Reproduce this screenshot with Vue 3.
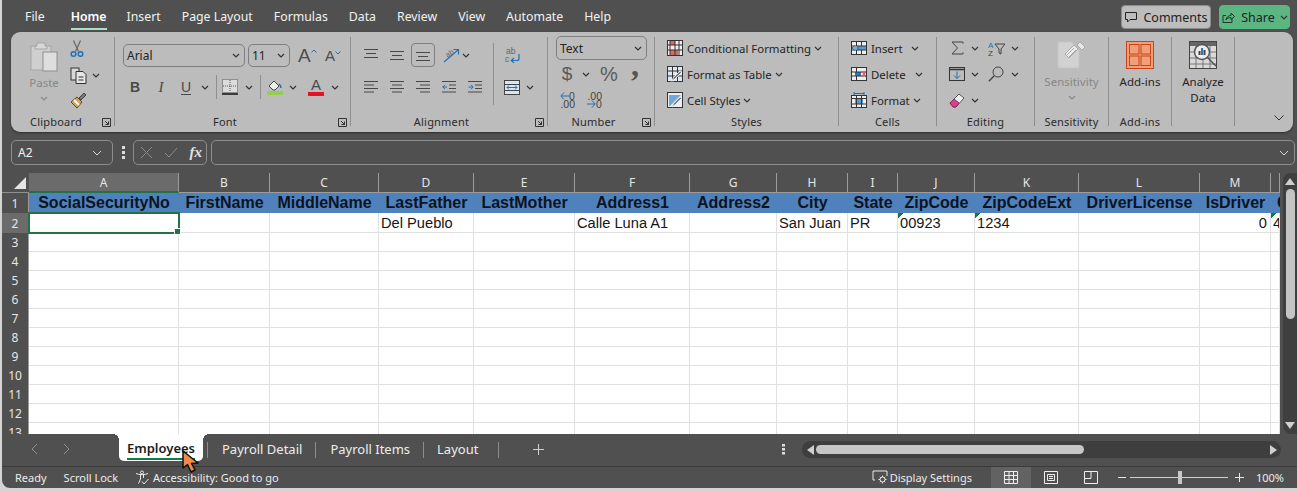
<script setup>
const menus = ['File', 'Home', 'Insert', 'Page Layout', 'Formulas', 'Data', 'Review', 'View', 'Automate', 'Help']
const cols = [
  { l: 'A', w: 150, h: 'SocialSecurityNo' },
  { l: 'B', w: 91, h: 'FirstName' },
  { l: 'C', w: 109, h: 'MiddleName' },
  { l: 'D', w: 95, h: 'LastFather', v: 'Del Pueblo' },
  { l: 'E', w: 101, h: 'LastMother' },
  { l: 'F', w: 115, h: 'Address1', v: 'Calle Luna A1' },
  { l: 'G', w: 87, h: 'Address2' },
  { l: 'H', w: 71, h: 'City', v: 'San Juan' },
  { l: 'I', w: 50, h: 'State', v: 'PR' },
  { l: 'J', w: 77, h: 'ZipCode', v: '00923', flag: true },
  { l: 'K', w: 104, h: 'ZipCodeExt', v: '1234', flag: true },
  { l: 'L', w: 121, h: 'DriverLicense' },
  { l: 'M', w: 71, h: 'IsDriver', v: '0', num: true },
  { l: '', w: 9, h: 'C', v: '4', flag: true, clip: true }
]
const gridCols = '27px ' + cols.map(c => c.w + 'px').join(' ')
const emptyRows = [3, 4, 5, 6, 7, 8, 9, 10, 11, 12, 13]
const tabs = ['Payroll Detail', 'Payroll Items', 'Layout']
</script>

<template>
  <div class="win">
    <header class="menu">
      <nav class="menu-items">
        <span v-for="m in menus" :key="m" class="menu-item" :class="{ on: m === 'Home' }">{{ m }}</span>
      </nav>
      <div class="menu-actions">
        <button class="btn-comments">
          <svg width="14" height="14" viewBox="0 0 14 14" fill="none" stroke="#222"><path d="M1.5 2.5h11v7H6l-2.5 2.5V9.500h-2z"/></svg>
          Comments
        </button>
        <button class="btn-share">
          <svg width="15" height="15" viewBox="0 0 15 15" fill="none" stroke="#1d3a28"><path d="M11 8.500v4H2v-7h3"/><path d="M5 10c.5-3 2.500-4.500 5-4.500V3l3.500 3.500L10 9.500V7.500C8 7.500 6 8 5 10z"/></svg>
          Share
          <svg class="chev" viewBox="0 0 8 5"><path d="M1 1l3 3 3-3"/></svg>
        </button>
      </div>
    </header>

    <section class="ribbon">
      <!-- Clipboard -->
      <div class="group g-clip">
        <div class="clip-body">
          <div class="big faded paste">
            <svg width="28" height="31" viewBox="0 0 28 31"><rect x="1" y="5" width="20" height="24" fill="#cfcfcf" stroke="#a5a5a5"/><path d="M7 5V2h8v3h2v3H5V5z" fill="#d8d8d8" stroke="#a5a5a5"/><rect x="13" y="11" width="14" height="19" fill="#dedede" stroke="#8e8e8e"/></svg>
            <span class="big-label gray">Paste</span>
            <svg class="chev gray-chev" viewBox="0 0 8 5"><path d="M1 1l3 3 3-3"/></svg>
          </div>
          <div class="clip-tools">
            <svg width="14" height="18" viewBox="0 0 14 18" fill="none"><path d="M3.500 0.500l5 11M10.500 0.500l-5 11" stroke="#6a6a6a" stroke-width="1.300"/><circle cx="3.500" cy="14" r="2.300" stroke="#1e6fb8" stroke-width="1.500"/><circle cx="10.500" cy="14" r="2.300" stroke="#1e6fb8" stroke-width="1.500"/></svg>
            <span class="tool-row">
              <svg width="18" height="17" viewBox="0 0 18 17" fill="none" stroke="#333"><rect x="1" y="1" width="8" height="12" fill="#d8d8d8"/><path d="M6 4.500h7l3 3v9H6z" fill="#e6e6e6"/><path d="M8.500 10h5M8.500 13h5"/></svg>
              <svg class="chev" viewBox="0 0 8 5"><path d="M1 1l3 3 3-3"/></svg>
            </span>
            <svg width="17" height="17" viewBox="0 0 17 17"><path d="M1 10l6-5 5 5-5 6z" fill="#d9a05b" stroke="#5d4a32"/><path d="M4 8l5 5" stroke="#fff" stroke-width="2"/><path d="M9 6l5-5 2 2-5 5z" fill="#777" stroke="#444"/></svg>
          </div>
        </div>
        <div class="label lab-clip">Clipboard</div>
        <svg class="launcher" viewBox="0 0 9 9" fill="none" stroke="#333"><path d="M.5.500h8v8h-8zM3 3l3.500 3.500M6.500 3.500v3h-3"/></svg>
      </div>

      <!-- Font -->
      <div class="group g-font">
        <div class="font-top">
          <div class="select sel-name">Arial<svg class="chev" viewBox="0 0 8 5"><path d="M1 1l3 3 3-3"/></svg></div>
          <div class="select sel-size">11<svg class="chev" viewBox="0 0 8 5"><path d="M1 1l3 3 3-3"/></svg></div>
          <span class="grow-a big-a">A<svg class="mini-caret" viewBox="0 0 6 4"><path d="M.5 3.500l2.500-2.500 2.500 2.500" fill="none" stroke="#2a6ebb"/></svg></span>
          <span class="grow-a small-a">A<svg class="mini-caret" viewBox="0 0 6 4"><path d="M.5.500l2.500 2.500 2.500-2.500" fill="none" stroke="#2a6ebb"/></svg></span>
        </div>
        <div class="font-row">
          <b class="t-b">B</b>
          <i class="t-i">I</i>
          <span class="t-u">U</span>
          <svg class="chev" viewBox="0 0 8 5"><path d="M1 1l3 3 3-3"/></svg>
          <span class="vsep"></span>
          <svg width="16" height="16" viewBox="0 0 16 16" fill="none"><rect x=".5" y=".5" width="15" height="13" fill="#dcdcdc" stroke="#555" stroke-dasharray="1 1"/><path d="M8 1v12M1 7h14" stroke="#555" stroke-dasharray="1 1"/><path d="M0 15h16" stroke="#111" stroke-width="1.500"/></svg>
          <svg class="chev" viewBox="0 0 8 5"><path d="M1 1l3 3 3-3"/></svg>
          <span class="vsep"></span>
          <svg width="16" height="17" viewBox="0 0 16 17"><path d="M2 7l5-5 5 5-4 4H6z" fill="#eee" stroke="#444"/><path d="M12 5c1.500 1 2 2 2 4" fill="none" stroke="#1e6fb8" stroke-width="1.500"/><rect y="12" width="16" height="4" fill="#92d050"/></svg>
          <svg class="chev" viewBox="0 0 8 5"><path d="M1 1l3 3 3-3"/></svg>
          <span class="t-color">A</span>
          <svg class="chev" viewBox="0 0 8 5"><path d="M1 1l3 3 3-3"/></svg>
        </div>
        <div class="label lab-wide">Font</div>
        <svg class="launcher" viewBox="0 0 9 9" fill="none" stroke="#333"><path d="M.5.500h8v8h-8zM3 3l3.500 3.500M6.500 3.500v3h-3"/></svg>
      </div>

      <!-- Alignment -->
      <div class="group g-align">
        <div class="align-body">
          <div class="align-grid">
            <svg class="al" viewBox="0 0 14 12"><path d="M0 .5h14M2 4.500h10M0 8.500h14"/></svg>
            <svg class="al" viewBox="0 0 14 12"><path d="M0 2.500h14M2 6.500h10M0 10.500h14"/></svg>
            <span class="al-box"><svg class="al" viewBox="0 0 14 12"><path d="M0 3.500h14M2 7.500h10M0 11.500h14"/></svg></span>
            <span class="orient">
              <svg width="17" height="16" viewBox="0 0 17 16" fill="none"><path d="M1 15L15 3M10.500 2.500H15.500V7.500" stroke="#1e6fb8" stroke-width="1.100"/><text x="3" y="10" font-size="7.500" fill="#666" font-family="Liberation Sans" transform="rotate(-35 5 8)">ab</text></svg>
              <svg class="chev" viewBox="0 0 8 5"><path d="M1 1l3 3 3-3"/></svg>
            </span>
            <svg class="al" viewBox="0 0 14 12"><path d="M0 .5h14M0 4h10M0 7.500h14M0 11h10"/></svg>
            <svg class="al" viewBox="0 0 14 12"><path d="M0 .5h14M2 4h10M0 7.500h14M2 11h10"/></svg>
            <svg class="al" viewBox="0 0 14 12"><path d="M0 .5h14M4 4h10M0 7.500h14M4 11h10"/></svg>
            <svg class="al" viewBox="0 0 14 12"><path d="M0 .5h14M7 4h7M7 7.500h7M0 11h14"/><path d="M5 6H.5M3 3.800L.8 6 3 8.200" stroke="#1e6fb8"/></svg>
            <svg class="al" viewBox="0 0 14 12"><path d="M0 .5h14M7 4h7M7 7.500h7M0 11h14"/><path d="M.5 6H5M3 3.800L5.200 6 3 8.200" stroke="#1e6fb8"/></svg>
          </div>
          <span class="vsep tall"></span>
          <div class="align-right">
            <svg width="16" height="16" viewBox="0 0 16 16" fill="none"><text x="1" y="7" font-size="8.500" fill="#666" font-family="Liberation Sans">ab</text><text x="0" y="15" font-size="8.500" fill="#666" font-family="Liberation Sans">c</text><path d="M14 7v4.500a2 2 0 0 1-2 2H6.500M9 11l-2.700 2.500L9 16" stroke="#1e6fb8" stroke-width="1.200"/></svg>
            <span class="tool-row merge">
              <svg width="16" height="15" viewBox="0 0 16 15"><rect x=".5" y=".5" width="15" height="14" fill="#d7e6f3" stroke="#444"/><path d="M1 4.500h14M1 10.500h14" stroke="#444"/><path d="M3 7.500h10M5 5.500l-2 2 2 2M11 5.500l2 2-2 2" fill="none" stroke="#1e6fb8"/></svg>
              <svg class="chev" viewBox="0 0 8 5"><path d="M1 1l3 3 3-3"/></svg>
            </span>
          </div>
        </div>
        <div class="label lab-off">Alignment</div>
        <svg class="launcher" viewBox="0 0 9 9" fill="none" stroke="#333"><path d="M.5.500h8v8h-8zM3 3l3.500 3.500M6.500 3.500v3h-3"/></svg>
      </div>

      <!-- Number -->
      <div class="group g-num">
        <div class="select sel-fmt">Text<svg class="chev" viewBox="0 0 8 5"><path d="M1 1l3 3 3-3"/></svg></div>
        <div class="num-row">
          <span class="sym">$</span>
          <svg class="chev" viewBox="0 0 8 5"><path d="M1 1l3 3 3-3"/></svg>
          <span class="sym pct">%</span>
          <span class="comma">,</span>
        </div>
        <div class="dec-row">
          <span class="dec">
            <svg width="9" height="8" viewBox="0 0 9 8" fill="none" stroke="#1e6fb8"><path d="M9 4H1M4 .5L.8 4 4 7.500"/></svg>
            <span>0</span><span class="dec-wide">.00</span>
          </span>
          <span class="dec">
            <span class="dec-wide">.00</span>
            <svg width="9" height="8" viewBox="0 0 9 8" fill="none" stroke="#1e6fb8"><path d="M0 4h8M5 .5L8.200 4 5 7.500"/></svg>
            <span>0</span>
          </span>
        </div>
        <div class="label lab-wide">Number</div>
        <svg class="launcher" viewBox="0 0 9 9" fill="none" stroke="#333"><path d="M.5.500h8v8h-8zM3 3l3.500 3.500M6.500 3.500v3h-3"/></svg>
      </div>

      <!-- Styles -->
      <div class="group g-list g-styles">
        <div class="list">
          <div class="list-row">
            <svg class="cellic" viewBox="0 0 16 16"><rect x=".5" y=".5" width="15" height="15" fill="#eee" stroke="#333"/><rect x="3" y="1" width="5" height="4" fill="#e06666"/><rect x="3" y="10" width="8" height="5" fill="#e06666"/><path d="M3 1v14M8 1v14M12 1v14M1 5h14M1 10h14" stroke="#333" fill="none"/></svg>
            <span>Conditional Formatting</span><svg class="chev" viewBox="0 0 8 5"><path d="M1 1l3 3 3-3"/></svg>
          </div>
          <div class="list-row">
            <svg class="cellic" viewBox="0 0 16 16"><rect x=".5" y=".5" width="15" height="15" fill="#dfe9f3" stroke="#333"/><path d="M1 5h14M1 10h14M5.500 1v14M10.500 1v14" stroke="#333"/><path d="M15 6l-7 7-3 2 1.500-3.500L13 5z" fill="#777" stroke="#eee"/><path d="M3 15.500h4" stroke="#1e6fb8"/></svg>
            <span>Format as Table</span><svg class="chev" viewBox="0 0 8 5"><path d="M1 1l3 3 3-3"/></svg>
          </div>
          <div class="list-row">
            <svg class="cellic" viewBox="0 0 16 16"><rect x=".5" y=".5" width="15" height="15" fill="#eee" stroke="#333"/><path d="M2 3h12L3 14H2z" fill="#6fa8dc"/><path d="M15 6l-7 7-3 2 1.500-3.500L13 5z" fill="#777" stroke="#eee"/></svg>
            <span>Cell Styles</span><svg class="chev" viewBox="0 0 8 5"><path d="M1 1l3 3 3-3"/></svg>
          </div>
        </div>
        <div class="label">Styles</div>
      </div>

      <!-- Cells -->
      <div class="group g-list g-cells">
        <div class="list">
          <div class="list-row">
            <svg class="cellic" viewBox="0 0 16 14"><rect x=".5" y=".5" width="15" height="13" fill="#eee" stroke="#333"/><rect x="6" y="5" width="9" height="4" fill="#5b9bd5"/><path d="M1 5h14M1 9h14M5.500 1v4M10.500 1v4M5.500 9v4M10.500 9v4" stroke="#333"/><path d="M9 7H1M3.500 4.500L1 7l2.500 2.500" fill="none" stroke="#1e6fb8"/></svg>
            <span class="cell-txt">Insert</span><svg class="chev" viewBox="0 0 8 5"><path d="M1 1l3 3 3-3"/></svg>
          </div>
          <div class="list-row">
            <svg class="cellic" viewBox="0 0 16 14"><rect x=".5" y=".5" width="15" height="13" fill="#eee" stroke="#333"/><rect x="4" y="5" width="6" height="4" fill="#2e75b6"/><path d="M1 5h14M1 9h14M5.500 1v4M5.500 9v4" stroke="#333"/><path d="M11 4.500l4 5M15 4.500l-4 5" stroke="#d9534f" stroke-width="1.200"/></svg>
            <span class="cell-txt del">Delete</span><svg class="chev" viewBox="0 0 8 5"><path d="M1 1l3 3 3-3"/></svg>
          </div>
          <div class="list-row">
            <svg class="cellic" viewBox="0 0 16 16"><rect x=".5" y="3.500" width="15" height="12" fill="#eee" stroke="#333"/><rect x="4" y="6" width="8" height="6" fill="#5b9bd5"/><path d="M1 6.500h14M1 12h14M5.500 4v11M10.500 4v11" stroke="#333"/><path d="M3 1.500h10M3 0v3M13 0v3" stroke="#1e6fb8"/></svg>
            <span>Format</span><svg class="chev" viewBox="0 0 8 5"><path d="M1 1l3 3 3-3"/></svg>
          </div>
        </div>
        <div class="label">Cells</div>
      </div>

      <!-- Editing -->
      <div class="group g-edit">
        <div class="edit-grid">
          <svg width="13" height="14" viewBox="0 0 13 14" fill="none" stroke="#444"><path d="M12 2.500V1H1l5.500 6L1 13h11v-1.500"/></svg>
          <svg class="chev" viewBox="0 0 8 5"><path d="M1 1l3 3 3-3"/></svg>
          <svg width="17" height="17" viewBox="0 0 17 17" fill="none"><text x="0" y="8" font-size="8" font-family="Liberation Sans" fill="#1e6fb8">A</text><text x="0" y="15.500" font-size="8" font-family="Liberation Sans" fill="#444">Z</text><path d="M7 4h10l-4 5v5l-2-1V9z" stroke="#444"/></svg>
          <svg class="chev" viewBox="0 0 8 5"><path d="M1 1l3 3 3-3"/></svg>
          <svg width="16" height="14" viewBox="0 0 16 14" fill="none"><rect x=".5" y=".5" width="15" height="13" stroke="#333"/><path d="M1 2.500h14" stroke="#333" stroke-width="1.500"/><path d="M8 4.500v7M5 8.500l3 3 3-3" stroke="#1e6fb8"/></svg>
          <svg class="chev" viewBox="0 0 8 5"><path d="M1 1l3 3 3-3"/></svg>
          <svg width="16" height="16" viewBox="0 0 16 16" fill="none" stroke="#444"><circle cx="10" cy="6" r="5"/><path d="M6.300 9.700L.8 15.200" stroke-width="1.400"/></svg>
          <svg class="chev" viewBox="0 0 8 5"><path d="M1 1l3 3 3-3"/></svg>
          <svg width="16" height="15" viewBox="0 0 16 15"><path d="M1 10l9-9 5 4-8 9H4z" fill="#eee" stroke="#555"/><path d="M1 10l4-4 5 4-3 4H4z" fill="#d6408f" stroke="#8c2a5f"/></svg>
          <svg class="chev" viewBox="0 0 8 5"><path d="M1 1l3 3 3-3"/></svg>
        </div>
        <div class="label">Editing</div>
      </div>

      <!-- Sensitivity -->
      <div class="group g-big g-sens">
        <div class="big faded">
          <svg width="30" height="30" viewBox="0 0 30 30"><path d="M1 2h13l8 7v19H1z" fill="#d2d2d2" stroke="#c4c4c4"/><path d="M8 14l9-9 4 4-9 9z" fill="#ececec" stroke="#aaa"/><path d="M20 5l3-3 5 5-3 3z" fill="#e8e8e8" stroke="#aaa"/><path d="M10 15l7-7M12 17l7-7" stroke="#aaa"/></svg>
          <span class="big-label gray">Sensitivity</span>
          <svg class="chev gray-chev" viewBox="0 0 8 5"><path d="M1 1l3 3 3-3"/></svg>
        </div>
        <div class="label">Sensitivity</div>
      </div>

      <!-- Add-ins -->
      <div class="group g-big g-add">
        <div class="big">
          <svg class="icon28" width="28" height="28" viewBox="0 0 28 28"><rect x=".5" y=".5" width="27" height="27" fill="#f0a078" stroke="#c8431b"/><rect x="3.500" y="3.500" width="9.500" height="9.500" fill="none" stroke="#c8431b"/><rect x="15" y="3.500" width="9.500" height="9.500" fill="none" stroke="#c8431b"/><rect x="3.500" y="15" width="9.500" height="9.500" fill="none" stroke="#c8431b"/><rect x="15" y="15" width="9.500" height="9.500" fill="none" stroke="#c8431b"/></svg>
          <span class="big-label">Add-ins</span>
        </div>
        <div class="label">Add-ins</div>
      </div>

      <!-- Analyze -->
      <div class="group g-big g-ana">
        <div class="big">
          <svg class="icon28" width="28" height="28" viewBox="0 0 28 28" fill="none"><rect x=".5" y=".5" width="27" height="27" fill="#d9d9d9" stroke="#444"/><rect x="1" y="1" width="26" height="4" fill="#666"/><path d="M1 11h26M1 17h26M1 23h26M7 5v22M14 5v22M21 5v22" stroke="#777"/><circle cx="13" cy="11" r="7.500" fill="#eee" stroke="#555" stroke-width="1.500"/><path d="M18.500 16.500L27 25" stroke="#555" stroke-width="1.500"/><rect x="9.500" y="10" width="2" height="4" fill="#444"/><rect x="12" y="7" width="2" height="7" fill="#2e75b6"/><rect x="14.500" y="9" width="2" height="5" fill="#444"/></svg>
          <span class="big-label two">Analyze<br>Data</span>
        </div>
      </div>

      <div class="ribbon-end">
        <svg class="collapse" viewBox="0 0 10 6" fill="none" stroke="#333"><path d="M.5.500L5 5 9.500.500"/></svg>
      </div>
    </section>

    <section class="fbar">
      <div class="fbox namebox"><span>A2</span><svg class="chev light big-chev" viewBox="0 0 10 6"><path d="M1 1l4 4 4-4"/></svg></div>
      <svg class="fdots" width="3" height="13" viewBox="0 0 3 13" fill="#ddd"><rect y="0" width="3" height="3"/><rect y="5" width="3" height="3"/><rect y="10" width="3" height="3"/></svg>
      <div class="fbox funcs">
        <svg width="13" height="13" viewBox="0 0 13 13" fill="none" stroke="#8a8a8a"><path d="M1 1l11 11M12 1L1 12"/></svg>
        <svg width="14" height="11" viewBox="0 0 14 11" fill="none" stroke="#8a8a8a"><path d="M1 6l4 4 8-9"/></svg>
        <span class="fx">fx</span>
      </div>
      <div class="fbox finput"><svg class="chev light big-chev" viewBox="0 0 10 6"><path d="M1 1l4 4 4-4"/></svg></div>
    </section>

    <section class="sheet-wrap">
      <div class="sheet" :style="{ gridTemplateColumns: gridCols }">
        <div class="corner"><svg width="12" height="12" viewBox="0 0 12 12"><path d="M12 0v12H0z" fill="#e4e4e4"/></svg></div>
        <div v-for="c in cols" :key="'c' + c.h" class="colhead" :class="{ active: c.l === 'A' }">{{ c.l }}</div>

        <div class="rowhead">1</div>
        <div v-for="c in cols" :key="'h' + c.h" class="hcell" :class="{ cliph: c.clip }">{{ c.h }}</div>

        <div class="rowhead active">2</div>
        <div
          v-for="c in cols"
          :key="'v' + c.h"
          class="cell"
          :class="{ selected: c.l === 'A', flag: c.flag, num: c.num }"
        >{{ c.v }}</div>

        <template v-for="r in emptyRows" :key="r">
          <div class="rowhead">{{ r }}</div>
          <div v-for="c in cols" :key="r + c.h" class="cell"></div>
        </template>
      </div>
      <div class="vscroll">
        <svg width="10" height="7" viewBox="0 0 10 7"><path d="M5 0l5 7H0z" fill="#cfcfcf"/></svg>
        <span class="vthumb"></span>
        <span class="vfill"></span>
        <svg width="10" height="7" viewBox="0 0 10 7"><path d="M5 7L0 0h10z" fill="#cfcfcf"/></svg>
      </div>
    </section>

    <section class="tabbar">
      <div class="tab-nav">
        <svg width="7" height="12" viewBox="0 0 7 12" fill="none" stroke="#8f8f8f"><path d="M6 1L1 6l5 5"/></svg>
        <svg width="7" height="12" viewBox="0 0 7 12" fill="none" stroke="#8f8f8f"><path d="M1 1l5 5-5 5"/></svg>
      </div>
      <div class="tab active"><span>Employees</span></div>
      <span class="tab-sep first"></span>
      <template v-for="t in tabs" :key="t">
        <div class="tab" :class="'t-' + t.replace(' ', '')">{{ t }}</div>
        <span class="tab-sep"></span>
      </template>
      <svg class="plus" width="11" height="11" viewBox="0 0 11 11" stroke="#cfcfcf"><path d="M5.500 0v11M0 5.500h11"/></svg>
      <svg class="hdots" width="3" height="11" viewBox="0 0 3 11" fill="#ddd"><rect y="0" width="3" height="2.500"/><rect y="4" width="3" height="2.500"/><rect y="8" width="3" height="2.500"/></svg>
      <div class="hscroll">
        <svg width="7" height="10" viewBox="0 0 7 10"><path d="M0 5l7-5v10z" fill="#cfcfcf"/></svg>
        <span class="hthumb"></span>
        <span class="hfill"></span>
        <svg width="7" height="10" viewBox="0 0 7 10"><path d="M7 5L0 0v10z" fill="#cfcfcf"/></svg>
      </div>
    </section>

    <footer class="status">
      <span class="st-ready">Ready</span>
      <span class="st-lock">Scroll Lock</span>
      <span class="st-acc">
        <svg width="15" height="15" viewBox="0 0 15 15" fill="none" stroke="#e8e8e8"><circle cx="7" cy="2.500" r="1.500"/><path d="M1 3.500c3 1.500 9 1.500 12 0M5.500 5v4l-2 4.500M8.500 5v3"/><path d="M7 11.500l2 2.500 4.500-5"/></svg>
        Accessibility: Good to go
      </span>
      <span class="st-disp">
        <svg width="16" height="14" viewBox="0 0 16 14" fill="none" stroke="#e8e8e8"><path d="M3 10H1V1h14v5"/><circle cx="10.500" cy="9.500" r="2.500"/><path d="M10.500 5.500v1.500M10.500 12v1.500M6.500 9.500H8M13 9.500h1.500M7.800 6.800l1 1M12.200 11.200l1 1M13.200 6.800l-1 1M8.800 11.200l-1 1"/></svg>
        Display Settings
      </span>
      <span class="view on"><svg width="14" height="13" viewBox="0 0 14 13" fill="none" stroke="#eee"><path d="M.5.500h13v12H.5zM.5 4.500h13M.5 8.500h13M5 .5v12M9.500.5v12"/></svg></span>
      <span class="view"><svg width="14" height="13" viewBox="0 0 14 13" fill="none" stroke="#eee"><path d="M.5.500h13v12H.5zM3.500 3.500h7v6h-7zM5 5.500h4M5 7.500h4"/></svg></span>
      <span class="view"><svg width="14" height="13" viewBox="0 0 14 13" fill="none" stroke="#eee"><path d="M.5.500h13v12H.5zM.5 7.500H7V.5"/></svg></span>
      <div class="zoom">
        <svg width="8" height="1" viewBox="0 0 8 1"><path d="M0 .5h8" stroke="#e8e8e8"/></svg>
        <span class="slider"><span class="knob"></span></span>
        <svg class="zoom-plus" width="9" height="9" viewBox="0 0 9 9" stroke="#e8e8e8"><path d="M4.500 0v9M0 4.500h9"/></svg>
      </div>
      <span class="st-pct">100%</span>
    </footer>

    <svg class="cursor" width="20" height="24" viewBox="0 0 20 24"><path d="M1 1l0 17 4.500-3.500L9 22l4-2-3.500-6.500L16 13z" fill="#f08a4b" stroke="#111" stroke-width="1.500" stroke-linejoin="round"/></svg>
  </div>
</template>

<style scoped>
.win {
  position: relative;
  width: 1295px;
  height: 488px;
  margin-left: 2px;
  background: #505050;
  border-bottom-left-radius: 8px;
  overflow: hidden;
  font-family: "Noto Sans", "Open Sans", sans-serif;
  font-size: 12px;
  color: #242424;
}
svg { flex: none; display: block; }
.chev { width: 8px; height: 5px; fill: none; stroke: #333; stroke-width: 1.200; }
.chev.light { stroke: #d8d8d8; }
.big-chev { width: 10px; height: 6px; stroke-width: 1; }
.gray-chev { stroke: #888; }

/* menu */
.menu { height: 32px; display: flex; align-items: center; justify-content: space-between; padding: 2px 7px 0 23px; box-sizing: border-box; }
.menu-items { display: flex; gap: 21px; }
.menu-item { color: #f2f2f2; font-size: 12.300px; line-height: 22px; position: relative; }
.menu-item.on { font-weight: 600; color: #fff; margin-left: 5px; margin-right: -1px; }
.menu-item.on::after { content: ""; position: absolute; left: 0; right: 0; bottom: -2px; height: 2px; background: #a9e2c3; }
.menu-actions { display: flex; gap: 8px; }
.menu-actions button { height: 24px; border-radius: 4px; display: flex; align-items: center; gap: 5px; font: 12.500px "Noto Sans", sans-serif; padding: 0; color: #222; justify-content: center; }
.btn-comments { width: 90px; background: #bdbdbd; border: 1px solid #8c8c8c; }
.btn-share { width: 71px; background: #5cb682; border: 1px solid #5cb682; color: #14301f; }

/* ribbon */
.ribbon { margin-left: 9px; width: 1282px; height: 100px; background: #bcbcbc; border-radius: 9px; box-shadow: 0 1px 2px #2e2e2e; display: flex; align-items: flex-start; padding-top: 5px; box-sizing: border-box; }
.group { position: relative; height: 89px; box-sizing: border-box; border-right: 1px solid #8f8f8f; display: flex; flex-direction: column; flex: none; }
.label { margin-top: auto; margin-bottom: -3px; height: 14px; line-height: 14px; font-size: 11px; text-align: center; color: #2a2a2a; letter-spacing: .2px; }
.lab-off { padding-right: 15px; }
.lab-clip { padding-right: 13px; }
.lab-wide { padding-right: 23px; }
.launcher { position: absolute; right: 3px; bottom: -1px; width: 9px; height: 9px; }

.g-clip { width: 104px; }
.clip-body { display: flex; padding-left: 11px; }
.big { display: flex; flex-direction: column; align-items: center; }
.paste { width: 44px; padding-top: 4px; }
.big-label { font-size: 11.500px; line-height: 16px; margin-top: 4px; white-space: nowrap; }
.paste .big-label { margin-top: 3px; }
.big-label.gray { color: #878787; }
.big-label.two { text-align: center; }
.gray-chev { margin-top: 5px; }
.icon28 { margin: 1px 0; }
.clip-tools { width: 32px; height: 72px; padding-left: 4px; box-sizing: border-box; display: flex; flex-direction: column; align-items: flex-start; justify-content: space-between; padding-top: 3px; }
.tool-row { display: flex; align-items: center; gap: 4px; }

.g-font { width: 236px; padding-left: 8px; }
.font-top { display: flex; align-items: center; margin-top: 7px; }
.select { box-sizing: border-box; height: 23px; border: 1px solid #7e7e7e; border-radius: 5px; display: flex; align-items: center; justify-content: space-between; padding: 0 4px 0 3px; font-size: 12px; }
.sel-name { width: 122px; }
.sel-size { width: 42px; margin-left: 3px; }
.grow-a { display: flex; color: #4d4d4d; font-family: "Liberation Sans", sans-serif; }
.big-a { font-size: 19px; margin-left: 8px; width: 27px; }
.small-a { font-size: 15px; width: 20px; }
.mini-caret { width: 6px; height: 4px; margin-top: 4px; }
.font-row { display: grid; grid-template-columns: 24px 28px 22px 16px 6px 22px 16px 6px 24px 12px 30px 12px; justify-items: center; align-items: center; height: 24px; margin-top: 8px; }
.t-b { font: bold 14px "Liberation Sans", sans-serif; color: #4a4a4a; }
.t-i { font: italic 15px "Liberation Serif", serif; color: #4a4a4a; }
.t-u { font: 14px "Liberation Sans", sans-serif; color: #4a4a4a; border-bottom: 1px solid #4a4a4a; line-height: 14px; }
.t-color { font: 15px "Liberation Sans", sans-serif; color: #4a4a4a; border-bottom: 4px solid #e81123; line-height: 14px; width: 16px; text-align: center; margin-left: 4px; }
.vsep { width: 1px; height: 24px; background: #8f8f8f; display: block; }

.g-align { width: 197px; }
.align-body { display: flex; align-items: flex-start; }
.align-grid { display: grid; grid-template-columns: repeat(5, 26px); grid-auto-rows: 32px; padding: 2px 0 0 7px; justify-items: center; align-items: center; }
.al { width: 14px; height: 12px; fill: none; stroke: #484848; }
.al-box { width: 24px; height: 24px; border: 1px solid #7e7e7e; border-radius: 4px; display: flex; align-items: center; justify-content: center; box-sizing: border-box; }
.orient { grid-column: span 2; justify-self: start; display: flex; align-items: center; gap: 2px; margin-left: 7px; }
.vsep.tall { height: 62px; margin: 6px 9px 0 5px; }
.align-right { display: flex; flex-direction: column; align-items: flex-start; padding-left: 2px; padding-top: 10px; gap: 17px; }
.merge { margin-left: -1px; gap: 6px; }

.g-num { width: 107px; padding-left: 8px; }
.sel-fmt { width: 91px; height: 24px; margin-top: -1px; }
.num-row { display: grid; grid-template-columns: 18px 20px 26px 26px; justify-items: center; align-items: center; height: 26px; margin-top: 1px; color: #5a5a5a; padding-left: 2px; }
.sym { font: 19px "Liberation Sans", sans-serif; }
.pct { font-size: 20px; }
.comma { font: bold 32px/20px "Liberation Serif", serif; margin-top: -18px; color: #555; }
.dec-row { display: flex; gap: 11px; height: 26px; padding: 5px 0 0 3px; box-sizing: border-box; }
.dec { width: 16px; height: 16px; display: grid; grid-template-columns: 10px 6px; grid-template-rows: 8px 8px; align-items: center; justify-items: center; font: 10.500px/8px "Liberation Sans", sans-serif; color: #444; }
.dec-wide { grid-column: 1 / 3; justify-self: end; }

.g-styles { width: 184px; padding-left: 12px; }
.g-cells { width: 98px; padding-left: 12px; }
.g-list .label { margin-left: -12px; }
.list { display: flex; flex-direction: column; margin-top: -2px; }
.list-row { height: 26px; display: flex; align-items: center; gap: 4px; font-size: 11.400px; white-space: nowrap; }
.list-row .chev { margin-left: -1px; }
.cellic { width: 16px; height: 16px; fill: none; }
.cell-txt { width: 37px; }
.cell-txt.del { width: 41px; }
.g-edit { width: 98px; }
.edit-grid { display: grid; grid-template-columns: 22px 14px 28px 10px; grid-auto-rows: 26px; justify-items: center; align-items: center; padding-left: 9px; margin-top: -2px; }

.g-big .big { padding-top: 3px; }
.g-sens { width: 74px; }
.g-add, .g-ana { width: 63px; }
.ribbon-end { flex: 1; height: 89px; display: flex; justify-content: flex-end; align-items: flex-end; padding-right: 9px; }
.collapse { width: 10px; height: 6px; margin-bottom: 5px; }

/* formula bar */
.fbar { display: flex; align-items: center; height: 25px; margin: 8px 2px 8px 9px; }
.fbox { box-sizing: border-box; height: 25px; border: 1px solid #8c8c8c; border-radius: 5px; display: flex; align-items: center; color: #f0f0f0; }
.namebox { width: 102px; justify-content: space-between; padding: 0 10px 0 6px; font-size: 12px; }
.fdots { margin: 0 8px 0 9px; }
.funcs { width: 74px; padding: 0 4px 0 6px; justify-content: space-between; }
.fx { font: italic bold 15px "Liberation Serif", serif; color: #e0e0e0; }
.finput { flex: 1; margin-left: 4px; justify-content: flex-end; padding-right: 5px; }

/* sheet */
.sheet-wrap { display: flex; height: 261px; }
.sheet { width: 1278px; flex: none; height: 261px; overflow: hidden; display: grid; grid-template-rows: 20px 20px 20px repeat(11, 19px); background: #fff; }
.corner { background: #505050; display: flex; justify-content: flex-end; align-items: flex-end; padding: 0 3px 3px 0; border-bottom: 1px solid #909090; box-sizing: border-box; }
.colhead { background: #505050; color: #e6e6e6; font-size: 12px; display: flex; align-items: center; justify-content: center; border-right: 1px solid #9c9c9c; border-bottom: 1px solid #9c9c9c; box-sizing: border-box; }
.colhead.active { background: #6b6b6b; border-bottom: 2px solid #217346; }
.rowhead { background: #505050; color: #e6e6e6; font-size: 12px; display: flex; align-items: center; justify-content: center; border-right: 1px solid #9c9c9c; box-sizing: border-box; }
.rowhead.active { background: #6b6b6b; }
.hcell { background: #4f81bd; color: #0b1420; font: bold 16px/20px "Liberation Sans", sans-serif; text-align: center; white-space: nowrap; overflow: hidden; }
.hcell.cliph { text-align: left; padding-left: 6px; box-sizing: border-box; }
.cell { background: #fff; color: #161616; font: 14.670px/20px "Liberation Sans", sans-serif; padding: 0 2px; box-sizing: border-box; border-right: 1px solid #e0e0e0; border-bottom: 1px solid #e0e0e0; white-space: nowrap; overflow: hidden; }
.cell.num { text-align: right; padding-right: 3px; }
.cell.flag { background-image: linear-gradient(135deg, #107c41 4px, transparent 4px); background-repeat: no-repeat; background-size: 7px 7px; }
.cell.selected { position: relative; outline: 2px solid #217346; outline-offset: -1px; overflow: visible; z-index: 2; }
.cell.selected::after { content: ""; position: absolute; right: -3px; bottom: -3px; width: 5px; height: 5px; background: #217346; border: 1px solid #fff; }
.vscroll { flex: 1; margin-left: 3px; background: #3f3f3f; border-radius: 8px 0 0 8px; display: flex; flex-direction: column; align-items: center; padding: 5px 0; box-sizing: border-box; }
.vthumb { width: 9px; height: 130px; display: block; margin-top: 4px; background: #c4c4c4; border-radius: 5px; flex: none; }
.vfill { flex: 1; }

/* tabs */
.tabbar { position: relative; height: 33px; box-sizing: border-box; border-bottom: 1px solid #3b3b3b; display: flex; align-items: flex-start; color: #ededed; font-size: 13px; }
.tabbar > * { flex: none; }
.tab-nav { width: 117px; display: flex; gap: 25px; padding: 9px 0 0 29px; box-sizing: border-box; }
.tab { height: 32px; line-height: 31px; white-space: nowrap; }
.tab.active { position: relative; width: 84px; height: 27px; background: #fff; color: #1d1d1d; border-radius: 0 0 5px 5px; text-align: center; font-weight: 600; line-height: 29px; font-size: 13px; }
.tab.active span { display: inline-block; line-height: 20px; border-bottom: 2px solid #107c41; margin-top: 3px; }
.tab.active::before, .tab.active::after { content: ""; position: absolute; top: 0; width: 6px; height: 6px; }
.tab.active::before { left: -6px; background: radial-gradient(circle at 0 100%, transparent 6px, #fff 6px); }
.tab.active::after { right: -6px; background: radial-gradient(circle at 100% 100%, transparent 6px, #fff 6px); }
.tab-sep { width: 1px; height: 16px; margin: 8px 14px 0 13px; background: #8c8c8c; }
.tab-sep.first { margin-left: 4px; }
.t-Layout + .tab-sep { margin-left: 20px; margin-right: 0; }
.t-PayrollItems + .tab-sep { margin-right: 13px; }
.plus { margin: 10px 0 0 34px; }
.hdots { margin: 10px 0 0 238px; }
.hscroll { width: 479px; height: 17px; margin: 7px 0 0 17px; border-radius: 9px; background: #3e3e3e; display: flex; align-items: center; box-sizing: border-box; padding: 0 4px 0 5px; }
.hthumb { display: block; width: 268px; height: 9px; margin-left: 2px; border-radius: 5px; background: #c6c6c6; }
.hfill { flex: 1; }

/* status */
.status { height: 22px; display: flex; align-items: center; color: #ececec; font-size: 11px; white-space: nowrap; padding: 0 0 2px 13px; box-sizing: border-box; }
.status > * { flex: none; }
.st-lock { margin-left: 17px; }
.st-acc { display: flex; align-items: center; gap: 3px; margin-left: 17px; }
.st-disp { display: flex; align-items: center; gap: 2px; margin-left: 593px; }
.view { width: 40px; height: 22px; display: flex; align-items: center; justify-content: center; }
.view.on { background: #626262; margin-left: 19px; }
.zoom { display: flex; align-items: center; gap: 4px; margin-left: 7px; }
.zoom-plus { margin-left: 3px; }
.slider { position: relative; display: block; width: 98px; height: 1px; background: #d0d0d0; }
.knob { position: absolute; left: 48px; top: -6px; width: 4px; height: 13px; background: #c8c8c8; }
.st-pct { margin-left: 12px; }

.cursor { position: absolute; left: 180px; top: 450px; }
</style>

<style>
html, body { margin: 0; background: #d4d4d4; }
</style>
